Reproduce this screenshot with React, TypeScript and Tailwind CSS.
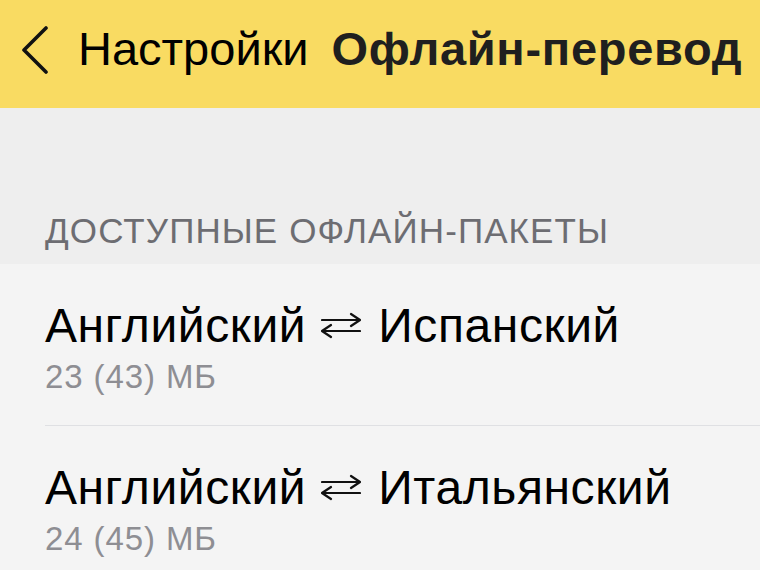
import React from 'react';

interface OfflinePack {
  from: string;
  to: string;
  size: string;
}

const packs: OfflinePack[] = [
  { from: 'Английский', to: 'Испанский', size: '23 (43) МБ' },
  { from: 'Английский', to: 'Итальянский', size: '24 (45) МБ' },
];

const SwapArrows: React.FC = () => (
  <svg
    width="40"
    height="30"
    viewBox="0 0 40 30"
    fill="none"
    stroke="#111"
    strokeWidth={2.2}
    strokeLinecap="round"
    strokeLinejoin="round"
    className="ml-[15px] mr-[17px] shrink-0"
    aria-label="⇄"
  >
    <path d="M1 9H39M30 3L39 9L30 15" />
    <path d="M39 20H1M10 14L1 20L10 26" />
  </svg>
);

const App: React.FC = () => {
  return (
    <div
      className="w-[760px] h-[570px] overflow-hidden bg-[#f4f4f4]"
      style={{ fontFamily: '"Liberation Sans", Arial, sans-serif' }}
    >
      {/* navigation bar */}
      <div className="h-[108px] bg-[#f9db62] flex items-start pt-[25px]">
        <svg
          width="30"
          height="50"
          viewBox="0 0 30 50"
          fill="none"
          stroke="#111"
          strokeWidth={3.6}
          strokeLinecap="round"
          strokeLinejoin="round"
          className="ml-[20px] mt-[-1px] shrink-0"
        >
          <path d="M26 4L4 26L26 48" />
        </svg>
        <span className="ml-[28px] text-[47px] leading-[47px] text-black">Настройки</span>
        <span className="ml-[23px] text-[47px] leading-[47px] font-bold tracking-[0.7px] text-[#1f1f1f] whitespace-nowrap">
          Офлайн-перевод
        </span>
      </div>

      {/* section header */}
      <div className="h-[156px] bg-[#eeeeee] flex items-end pb-[16px] pl-[45px]">
        <span className="text-[35px] leading-[35px] text-[#6d6d72] tracking-[1.1px]">
          ДОСТУПНЫЕ ОФЛАЙН-ПАКЕТЫ
        </span>
      </div>

      {/* list */}
      <div className="pl-[45px]">
        {packs.map((pack, idx) => (
          <div key={pack.to} className={idx > 0 ? 'border-t border-[#dfe0e3]' : ''}>
            <div className="pt-[38px] pb-[32px]">
              <div className="flex items-center text-[48px] leading-[48px] tracking-[0.6px] text-black whitespace-nowrap">
                <span>{pack.from}</span>
                <SwapArrows />
                <span>{pack.to}</span>
              </div>
              <div className="mt-[10px] text-[33px] leading-[33px] tracking-[0.9px] text-[#8e8e93]">
                {pack.size}
              </div>
            </div>
          </div>
        ))}
      </div>
    </div>
  );
};

export default App;
